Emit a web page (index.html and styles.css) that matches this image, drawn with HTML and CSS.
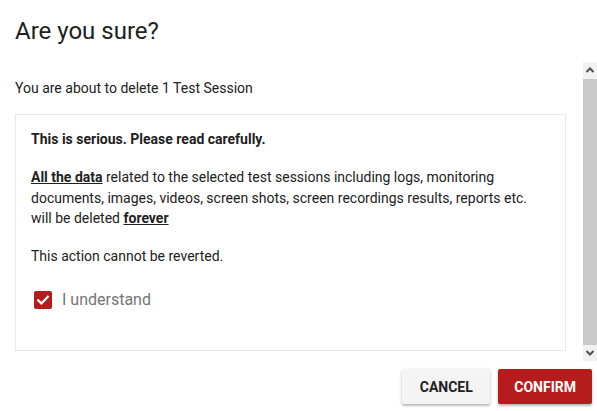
FILE: index.html
```html
<!DOCTYPE html>
<html>
<head>
<meta charset="utf-8">
<link rel="stylesheet" href="styles.css">
</head>
<body>
<div class="dialog">
  <h1 class="title">Are you sure?</h1>
  <div class="scroll-row">
    <div class="content">
      <p class="intro">You are about to delete 1 Test Session</p>
      <div class="warn-box">
        <p class="strong-line">This is serious. Please read carefully.</p>
        <p class="para"><b class="u">All the data</b> related to the selected test sessions including logs, monitoring documents, images, videos, screen shots, screen recordings results, reports etc. will be deleted <b class="u">forever</b></p>
        <p class="para">This action cannot be reverted.</p>
        <label class="check-row">
          <span class="checkbox">
            <svg width="18" height="18" viewBox="0 0 18 18"><path d="M4.2 9.4 L7.4 12.4 L13.8 5.8" fill="none" stroke="#fff" stroke-width="2.2" stroke-linecap="square"/></svg>
          </span>
          <span class="check-label">I understand</span>
        </label>
      </div>
    </div>
    <div class="scrollbar">
      <div class="sb-btn sb-up"><svg width="14" height="17" viewBox="0 0 14 17"><path d="M3.5 10 L7 6.5 L10.5 10" fill="none" stroke="#505050" stroke-width="2"/></svg></div>
      <div class="sb-track"><div class="sb-thumb"></div></div>
      <div class="sb-btn sb-down"><svg width="14" height="16" viewBox="0 0 14 16"><path d="M3.5 6 L7 9.5 L10.5 6" fill="none" stroke="#505050" stroke-width="2"/></svg></div>
    </div>
  </div>
  <div class="actions">
    <button class="btn btn-cancel">Cancel</button>
    <button class="btn btn-confirm">Confirm</button>
  </div>
</div>
</body>
</html>
```

FILE: styles.css
```css
html, body {
  margin: 0;
  padding: 0;
  background: #fff;
}
body {
  font-family: Roboto, "Liberation Sans", Arial, sans-serif;
  color: #212121;
  width: 597px;
  height: 411px;
  overflow: hidden;
}
.dialog {
  display: flex;
  flex-direction: column;
  height: 411px;
}
.title {
  margin: 0;
  padding: 15px 15px 15px 15px;
  font-size: 24px;
  line-height: 32px;
  font-weight: 400;
  color: #212121;
}
.scroll-row {
  display: flex;
  height: 299px;
}
.content {
  flex: 1;
  overflow: hidden;
  padding: 16px 17px 0 15px;
}
.intro {
  margin: 0 0 16px 0;
  font-size: 14px;
  line-height: 20px;
}
.warn-box {
  border: 1px solid #e8e8e8;
  padding: 14px 15px 38px 15px;
  margin-bottom: 24px;
}
.strong-line {
  margin: 0;
  font-size: 14px;
  line-height: 20.5px;
  font-weight: 700;
}
.para {
  margin: 17.5px 0 0 0;
  font-size: 14px;
  line-height: 20.5px;
}
.u {
  font-weight: 700;
  text-decoration: underline;
}
.check-row {
  display: flex;
  align-items: center;
  height: 24px;
  margin-top: 21px;
}
.checkbox {
  width: 18px;
  height: 18px;
  border-radius: 2px;
  background: #b71c1c;
  margin-left: 3px;
  margin-right: 10px;
  display: flex;
}
.check-label {
  font-size: 16px;
  line-height: 24px;
  color: #757575;
}
.scrollbar {
  width: 14px;
  display: flex;
  flex-direction: column;
  background: #f1f1f1;
}
.sb-btn {
  display: flex;
}
.sb-up { height: 17px; }
.sb-down { height: 16px; }
.sb-track {
  flex: 1;
  display: flex;
}
.sb-thumb {
  flex: 1;
  background: #c9c9c9;
}
.actions {
  display: flex;
  justify-content: flex-end;
  gap: 8px;
  padding: 8px 5px 0 0;
}
.btn {
  height: 35px;
  min-width: 88px;
  padding: 0 16px;
  border: none;
  border-radius: 2px;
  font-family: Roboto, "Liberation Sans", Arial, sans-serif;
  font-size: 14px;
  font-weight: 700;
  text-transform: uppercase;
  box-shadow: 0 2px 2px rgba(0,0,0,0.2), 0 1px 4px rgba(0,0,0,0.12);
}
.btn-cancel {
  background: #f4f4f4;
  color: #212121;
}
.btn-confirm {
  background: #b71c1c;
  color: #fff;
}
```
